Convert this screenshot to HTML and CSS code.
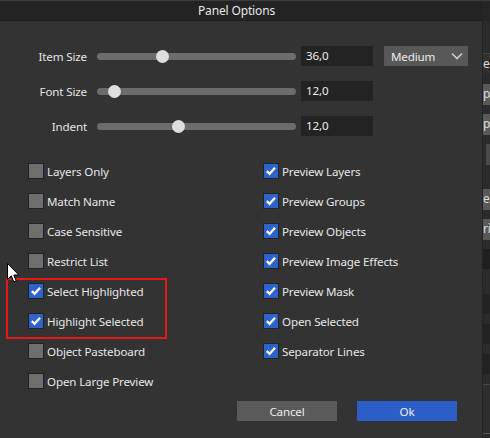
FILE: index.html
```html
<!DOCTYPE html>
<html>
<head>
<meta charset="utf-8">
<link rel="stylesheet" href="styles.css">
</head>
<body>
<div class="screen">
  <div class="dialog">
    <div class="titlebar">Panel Options</div>
    <div class="sliders">
      <div class="srow">
        <span class="slabel">Item Size</span>
        <div class="track"><span class="thumb" style="left:65px"></span></div>
        <div class="value">36,0</div>
        <div class="dropdown"><span>Medium</span>
          <svg class="chev" width="12" height="8" viewBox="0 0 12 8"><path d="M1 1.5 L6 6.5 L11 1.5" fill="none" stroke="#cfcfcf" stroke-width="1.6"/></svg>
        </div>
      </div>
      <div class="srow">
        <span class="slabel">Font Size</span>
        <div class="track"><span class="thumb" style="left:17px"></span></div>
        <div class="value">12,0</div>
      </div>
      <div class="srow">
        <span class="slabel">Indent</span>
        <div class="track"><span class="thumb" style="left:81px"></span></div>
        <div class="value">12,0</div>
      </div>
    </div>
    <div class="checks">
      <div class="col col-left">
        <label class="chk"><span class="box"></span>Layers Only</label>
        <label class="chk"><span class="box"></span>Match Name</label>
        <label class="chk"><span class="box"></span>Case Sensitive</label>
        <label class="chk"><span class="box"></span>Restrict List</label>
        <label class="chk"><span class="box on"><svg viewBox="0 0 16 16" width="14" height="14"><path d="M3.2 8.2 L6.4 11.2 L12.6 4.4" fill="none" stroke="#fff" stroke-width="2.6"/></svg></span>Select Highlighted</label>
        <label class="chk"><span class="box on"><svg viewBox="0 0 16 16" width="14" height="14"><path d="M3.2 8.2 L6.4 11.2 L12.6 4.4" fill="none" stroke="#fff" stroke-width="2.6"/></svg></span>Highlight Selected</label>
        <label class="chk"><span class="box"></span>Object Pasteboard</label>
        <label class="chk"><span class="box"></span>Open Large Preview</label>
      </div>
      <div class="col col-right">
        <label class="chk"><span class="box on"><svg viewBox="0 0 16 16" width="14" height="14"><path d="M3.2 8.2 L6.4 11.2 L12.6 4.4" fill="none" stroke="#fff" stroke-width="2.6"/></svg></span>Preview Layers</label>
        <label class="chk"><span class="box on"><svg viewBox="0 0 16 16" width="14" height="14"><path d="M3.2 8.2 L6.4 11.2 L12.6 4.4" fill="none" stroke="#fff" stroke-width="2.6"/></svg></span>Preview Groups</label>
        <label class="chk"><span class="box on"><svg viewBox="0 0 16 16" width="14" height="14"><path d="M3.2 8.2 L6.4 11.2 L12.6 4.4" fill="none" stroke="#fff" stroke-width="2.6"/></svg></span>Preview Objects</label>
        <label class="chk"><span class="box on"><svg viewBox="0 0 16 16" width="14" height="14"><path d="M3.2 8.2 L6.4 11.2 L12.6 4.4" fill="none" stroke="#fff" stroke-width="2.6"/></svg></span>Preview Image Effects</label>
        <label class="chk"><span class="box on"><svg viewBox="0 0 16 16" width="14" height="14"><path d="M3.2 8.2 L6.4 11.2 L12.6 4.4" fill="none" stroke="#fff" stroke-width="2.6"/></svg></span>Preview Mask</label>
        <label class="chk"><span class="box on"><svg viewBox="0 0 16 16" width="14" height="14"><path d="M3.2 8.2 L6.4 11.2 L12.6 4.4" fill="none" stroke="#fff" stroke-width="2.6"/></svg></span>Open Selected</label>
        <label class="chk"><span class="box on"><svg viewBox="0 0 16 16" width="14" height="14"><path d="M3.2 8.2 L6.4 11.2 L12.6 4.4" fill="none" stroke="#fff" stroke-width="2.6"/></svg></span>Separator Lines</label>
      </div>
    </div>
    <div class="buttons">
      <button class="btn cancel">Cancel</button>
      <button class="btn ok">Ok</button>
    </div>
    <div class="highlight"></div>
    <svg class="cursor" width="13" height="21" viewBox="0 0 13 21"><path d="M0.5 0.5 L0.5 16.5 L4.3 12.8 L6.8 18.8 L9.2 17.8 L6.8 12 L11.8 12 Z" fill="#fff" stroke="#000" stroke-width="1"/></svg>
  </div>
  <div class="bgstrip">
    <div class="bg b1"></div>
    <div class="bg b2">er</div>
    <div class="bg b3">p</div>
    <div class="bg b4">pi</div>
    <div class="bg b5"></div>
    <div class="bg b6">e</div>
    <div class="bg b7">rio</div>
    <div class="bg b8"></div>
    <div class="bg b9"></div>
    <div class="bg b10"></div>
    <div class="bg b11"></div>
    <div class="bg b12"></div>
  </div>
</div>
</body>
</html>
```

FILE: styles.css
```css
* { box-sizing: border-box; }
html, body { margin: 0; padding: 0; }
body {
  background: #2a2a2a;
  font-family: "Noto Sans", "Open Sans", sans-serif;
  font-size: 11.6px;
  letter-spacing: -0.15px;
  color: #e8e8e8;
  width: 490px;
  height: 438px;
  overflow: hidden;
}
.screen {
  display: flex;
  width: 490px;
  height: 438px;
  border-top: 1px solid #3c3c3c;
}
.dialog {
  position: relative;
  width: 483px;
  height: 437px;
  background: #333333;
  border-right: 1px solid #232323;
  display: flex;
  flex-direction: column;
}
.titlebar {
  height: 20px;
  background: #232323;
  border-bottom: 1px solid #1d1d1d;
  text-align: center;
  font-size: 12px;
  line-height: 19px;
  color: #e6e6e6;
  padding-right: 9px;
}
.sliders {
  padding-top: 25px;
  display: flex;
  flex-direction: column;
  gap: 15px;
}
.srow {
  display: flex;
  align-items: center;
  height: 20px;
}
.slabel {
  width: 87px;
  text-align: right;
  color: #e4e4e4;
}
.track {
  position: relative;
  margin-left: 10px;
  width: 199px;
  height: 7px;
  border-radius: 4px;
  background: #6c6c6c;
}
.thumb {
  position: absolute;
  top: 50%;
  width: 13px;
  height: 13px;
  margin-left: -6.5px;
  margin-top: -6.5px;
  border-radius: 50%;
  background: #dedede;
}
.value {
  margin-left: 5px;
  width: 72px;
  height: 20px;
  background: #232323;
  line-height: 20px;
  padding-left: 5px;
  color: #ececec;
}
.dropdown {
  margin-left: 11px;
  width: 84px;
  height: 20px;
  background: #585858;
  display: flex;
  align-items: center;
  justify-content: space-between;
  padding: 0 5px 0 7px;
  color: #ececec;
}
.chev { display: block; }
.checks {
  display: flex;
  padding-top: 20px;
  padding-left: 28px;
}
.col { display: flex; flex-direction: column; }
.col-left { width: 235px; }
.chk {
  display: flex;
  align-items: center;
  height: 30px;
  color: #e6e6e6;
}
.box {
  width: 16px;
  height: 16px;
  margin-right: 3px;
  background: #6e6e6e;
  border: 1px solid #222;
  display: flex;
  align-items: center;
  justify-content: center;
}
.box.on { background: #2d63cb; }
.box svg { display: block; }
.buttons {
  display: flex;
  justify-content: flex-end;
  gap: 20px;
  padding-top: 5px;
  padding-right: 25px;
}
.btn {
  width: 100px;
  height: 20px;
  border: none;
  font-family: "Noto Sans", "Open Sans", sans-serif;
  font-size: 11.6px;
  letter-spacing: -0.15px;
  color: #eeeeee;
  padding: 0;
}
.cancel { background: #5a5a5a; }
.ok { background: #2b5fc7; }
.highlight {
  position: absolute;
  left: 6px;
  top: 277px;
  width: 161px;
  height: 61px;
  border: 2px solid #e21a1a;
}
.cursor {
  position: absolute;
  left: 7px;
  top: 262px;
}
.bgstrip {
  flex: 1;
  position: relative;
  background: #2b2b2b;
  overflow: hidden;
}
.bg {
  position: absolute;
  left: 0;
  width: 10px;
  color: #ddd;
  font-size: 12px;
  line-height: 20px;
  white-space: nowrap;
  overflow: hidden;
}
.b1 { top: 0; height: 20px; background: #262626; }
.b2 { top: 52px; height: 20px; background: #303030; border-top: 1px solid #444; }
.b3 { top: 83px; height: 21px; background: #595959; }
.b4 { top: 113px; height: 21px; background: #595959; }
.b5 { top: 143px; height: 21px; left: 3px; background: #4a4a4a; }
.b6 { top: 188px; height: 21px; background: #595959; }
.b7 { top: 218px; height: 21px; background: #595959; }
.b8 { top: 248px; height: 20px; background: #1f1f1f; }
.b9 { top: 293px; height: 20px; background: #222; }
.b10 { top: 323px; height: 20px; background: #222; }
.b11 { top: 353px; height: 20px; background: #222; }
.b12 { top: 383px; height: 50px; background: #2e2e2e; border-top: 1px solid #444; border-bottom: 1px solid #555; }
```
